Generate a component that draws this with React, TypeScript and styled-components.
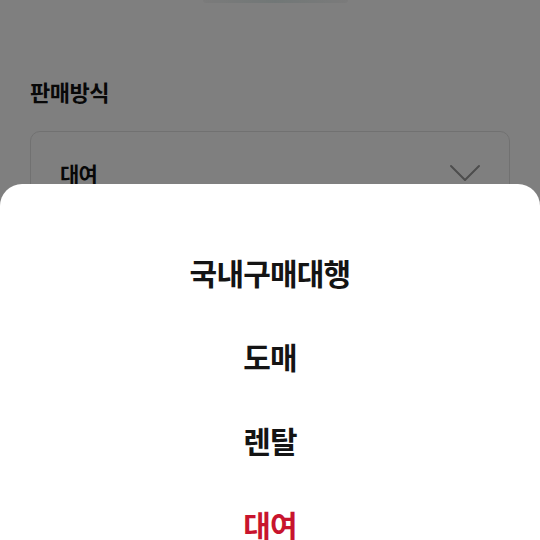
import React from "react";
import styled, { createGlobalStyle } from "styled-components";

const Global = createGlobalStyle`
  html, body { margin: 0; padding: 0; background: #ffffff; }
  body { font-family: "Noto Sans CJK KR", "Noto Sans", sans-serif; overflow: hidden; }
  #root { width: 540px; height: 540px; position: relative; overflow: hidden; }
`;

const Page = styled.div`
  width: 540px;
  height: 540px;
  box-sizing: border-box;
  padding: 0 30px;
  display: flex;
  flex-direction: column;
  background: #ffffff;
`;

const TopButton = styled.div`
  align-self: center;
  width: 145px;
  height: 3px;
  margin-left: 10px;
  border-radius: 0 0 6px 6px;
  background: linear-gradient(90deg, #f6f6f6, #e3efee 50%, #f6f6f6);
`;

const Label = styled.div`
  margin-top: 73px;
  font-size: 22px;
  line-height: 30px;
  font-weight: 700;
  letter-spacing: -0.5px;
  color: #111111;
`;

const SelectBox = styled.div`
  margin-top: 25px;
  height: 84px;
  box-sizing: border-box;
  border: 1px solid #e2e2e2;
  border-radius: 10px;
  display: flex;
  align-items: center;
  justify-content: space-between;
  padding: 0 28px 0 29px;
`;

const SelectValue = styled.span`
  font-size: 21px;
  font-weight: 700;
  letter-spacing: -0.8px;
  color: #111111;
`;

const Overlay = styled.div`
  position: absolute;
  inset: 0;
  background: rgba(0, 0, 0, 0.5);
`;

const Sheet = styled.div`
  position: absolute;
  left: 0;
  right: 0;
  top: 184px;
  bottom: -40px;
  background: #ffffff;
  border-radius: 22px 22px 0 0;
  padding-top: 46px;
  display: flex;
  flex-direction: column;
`;

const Option = styled.div<{ $active?: boolean }>`
  height: 84px;
  display: flex;
  align-items: center;
  justify-content: center;
  font-size: 30px;
  font-weight: 700;
  letter-spacing: -0.8px;
  color: ${(p) => (p.$active ? "#c8142e" : "#141414")};
`;

const options = ["국내구매대행", "도매", "렌탈", "대여"];

export default function App() {
  return (
    <>
      <Global />
      <Page>
        <TopButton />
        <Label>판매방식</Label>
        <SelectBox>
          <SelectValue>대여</SelectValue>
          <svg width="32" height="18" viewBox="0 0 32 18" fill="none">
            <polyline points="2,2 16,16 30,2" stroke="#9a9a9a" strokeWidth="2" strokeLinecap="round" strokeLinejoin="round" />
          </svg>
        </SelectBox>
      </Page>
      <Overlay />
      <Sheet>
        {options.map((o) => (
          <Option key={o} $active={o === "대여"}>
            {o}
          </Option>
        ))}
      </Sheet>
    </>
  );
}
